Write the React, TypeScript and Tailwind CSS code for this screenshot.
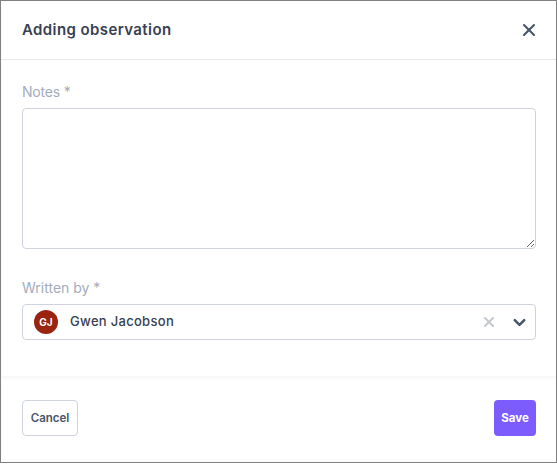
import { ChevronDown, X } from 'lucide-react';

export default function App() {
  return (
    <div className="h-[464px] w-[557px] bg-white font-['Inter','Liberation_Sans',sans-serif]">
      <div className="flex h-[463px] w-[557px] flex-col border border-[#808080]">
        <header className="flex h-[59px] shrink-0 items-center justify-between border-b border-[#e5e7eb] pl-[21px] pr-[17px]">
          <h1 className="text-[15px] font-semibold tracking-[0.4px] text-[#374151]">Adding observation</h1>
          <button className="text-[#475569]">
            <X size={20} strokeWidth={2.5} />
          </button>
        </header>
        <main className="flex-1 px-[21px]">
          <label className="mt-[23px] block text-[14px] leading-[17px] tracking-[-0.2px] text-[#a3acbd]">Notes *</label>
          <textarea className="mt-[8px] block h-[141px] w-[514px] rounded border border-[#cdd2dc] bg-white" />
          <label className="mt-[30px] block text-[14px] leading-[17px] text-[#a3acbd]">Written by *</label>
          <div className="mt-[8px] flex h-[36px] w-[514px] items-center rounded border border-[#cdd2dc] pl-[11px] pr-[6px]">
            <span className="flex h-6 w-6 items-center justify-center rounded-full bg-[#9b2410] text-[10px] font-bold text-white">GJ</span>
            <span className="ml-3 flex-1 text-[13px] font-medium tracking-[0.3px] text-[#374151]">Gwen Jacobson</span>
            <X size={16} strokeWidth={3.2} className="text-[#c8cad0]" />
            <ChevronDown size={19} strokeWidth={3.2} className="ml-[13px] text-[#475569]" />
          </div>
        </main>
        <footer className="flex h-[86px] shrink-0 items-start justify-between bg-gradient-to-b from-[#f6f7f7] to-white to-[5px] pl-[21px] pr-[20px] pt-[24px]">
          <button className="h-9 w-14 rounded border border-[#cdd2dc] bg-white pt-px text-[11.5px] font-semibold text-[#475569]">Cancel</button>
          <button className="h-9 w-[42px] rounded bg-[#7c5cfc] pt-px text-[11.5px] font-bold text-white">Save</button>
        </footer>
      </div>
    </div>
  );
}
